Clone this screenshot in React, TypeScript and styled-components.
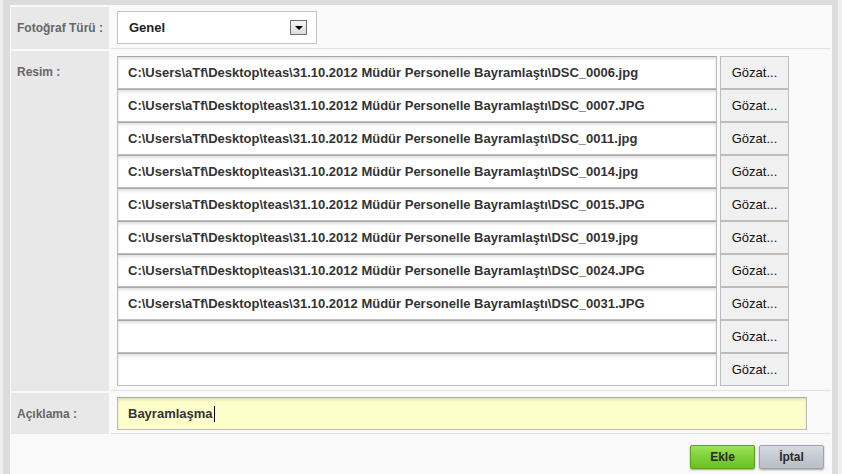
import React from "react";
import styled, { createGlobalStyle } from "styled-components";

const Global = createGlobalStyle`
  html, body { margin: 0; padding: 0; }
  body { background: #dcdcdc; font-family: "Liberation Sans", Arial, sans-serif; }
`;

const Page = styled.div`
  width: 842px;
  height: 474px;
  box-sizing: border-box;
  background: #dcdcdc;
  border-left: 3px solid #efefef;
  border-right: 4px solid #efefef;
  padding: 5px 6px 0 7px;
  overflow: hidden;
`;

const Form = styled.div`
  background: #f9f9f9;
  height: 100%;
  box-sizing: border-box;
  padding: 2px 1px 0 1px;
  display: flex;
  flex-direction: column;
  gap: 2px;
`;

const Row = styled.div`
  display: grid;
  grid-template-columns: 98px 1fr;
  gap: 2px;
`;

const Label = styled.div<{ $top?: boolean }>`
  background: #e8e8e8;
  color: #666;
  font-weight: bold;
  font-size: 12px;
  padding: 0 6px;
  display: flex;
  align-items: ${(p) => (p.$top ? "flex-start" : "center")};
  padding-top: ${(p) => (p.$top ? "14px" : "0")};
`;

const Cell = styled.div<{ $pt: number; $pb: number }>`
  background: #fafafa;
  border-bottom: 1px solid #e2e2e2;
  padding: ${(p) => p.$pt}px 0 ${(p) => p.$pb}px 6px;
`;

const Select = styled.div`
  width: 200px;
  height: 33px;
  box-sizing: border-box;
  border: 1px solid #c4c4c4;
  background: #fff;
  display: flex;
  align-items: center;
  justify-content: space-between;
  padding: 0 9px 0 11px;
  font-size: 13px;
  font-weight: bold;
  color: #222;
`;

const Arrow = styled.div`
  width: 17px;
  height: 15px;
  box-sizing: border-box;
  border: 1px solid #6f6f6f;
  background: linear-gradient(#f4f4f4, #dedede);
  display: flex;
  align-items: center;
  justify-content: center;
  &::after {
    content: "";
    border-left: 4px solid transparent;
    border-right: 4px solid transparent;
    border-top: 4px solid #000;
  }
`;

const FileList = styled.div`
  display: flex;
  flex-direction: column;
`;

const FileRow = styled.div`
  display: flex;
  gap: 3px;
  height: 33px;
`;

const TextBox = styled.div<{ $w: number; $yellow?: boolean }>`
  width: ${(p) => p.$w}px;
  height: 33px;
  box-sizing: border-box;
  border: 1px solid #bdbdbd;
  border-top-color: #a8a8a8;
  background: ${(p) => (p.$yellow ? "#fefecb" : "#fff")};
  box-shadow: inset 0 2px 3px rgba(0, 0, 0, 0.12);
  display: flex;
  align-items: center;
  padding-left: 10px;
  font-size: 13px;
  font-weight: bold;
  color: #333;
  white-space: nowrap;
  overflow: hidden;
`;

const Caret = styled.span`
  display: inline-block;
  width: 1px;
  height: 16px;
  background: #000;
  margin-left: 1px;
`;

const Browse = styled.div`
  width: 69px;
  height: 33px;
  box-sizing: border-box;
  border: 1px solid #bdbdbd;
  background: #f0f0f0;
  display: flex;
  align-items: center;
  justify-content: center;
  font-size: 13px;
  color: #111;
`;

const Footer = styled.div`
  flex: 1;
  display: flex;
  justify-content: flex-end;
  align-items: flex-start;
  gap: 4px;
  padding: 9px 7px 0 0;
`;

const Btn = styled.div<{ $green?: boolean }>`
  width: 65px;
  height: 24px;
  box-sizing: border-box;
  border-radius: 2px;
  border: 1px solid ${(p) => (p.$green ? "#5aa21c" : "#9ea3ab")};
  background: ${(p) =>
    p.$green
      ? "linear-gradient(#9ee25a, #7fd03a 50%, #6cc020)"
      : "linear-gradient(#d6d9df, #c6cad2 50%, #b9bec7)"};
  box-shadow: 0 1px 2px rgba(0, 0, 0, 0.35);
  display: flex;
  align-items: center;
  justify-content: center;
  font-size: 12px;
  font-weight: bold;
  color: #2a2a2a;
`;

const files = [
  "C:\\Users\\aTf\\Desktop\\teas\\31.10.2012 Müdür Personelle Bayramlaştı\\DSC_0006.jpg",
  "C:\\Users\\aTf\\Desktop\\teas\\31.10.2012 Müdür Personelle Bayramlaştı\\DSC_0007.JPG",
  "C:\\Users\\aTf\\Desktop\\teas\\31.10.2012 Müdür Personelle Bayramlaştı\\DSC_0011.jpg",
  "C:\\Users\\aTf\\Desktop\\teas\\31.10.2012 Müdür Personelle Bayramlaştı\\DSC_0014.jpg",
  "C:\\Users\\aTf\\Desktop\\teas\\31.10.2012 Müdür Personelle Bayramlaştı\\DSC_0015.JPG",
  "C:\\Users\\aTf\\Desktop\\teas\\31.10.2012 Müdür Personelle Bayramlaştı\\DSC_0019.jpg",
  "C:\\Users\\aTf\\Desktop\\teas\\31.10.2012 Müdür Personelle Bayramlaştı\\DSC_0024.JPG",
  "C:\\Users\\aTf\\Desktop\\teas\\31.10.2012 Müdür Personelle Bayramlaştı\\DSC_0031.JPG",
  "",
  "",
];

export default function App() {
  return (
    <>
      <Global />
      <Page>
        <Form>
          <Row>
            <Label>Fotoğraf Türü :</Label>
            <Cell $pt={4} $pb={4}>
              <Select>
                Genel
                <Arrow />
              </Select>
            </Cell>
          </Row>
          <Row>
            <Label $top>Resim :</Label>
            <Cell $pt={5} $pb={4}>
              <FileList>
                {files.map((f, i) => (
                  <FileRow key={i}>
                    <TextBox $w={600}>{f}</TextBox>
                    <Browse>Gözat...</Browse>
                  </FileRow>
                ))}
              </FileList>
            </Cell>
          </Row>
          <Row>
            <Label>Açıklama :</Label>
            <Cell $pt={4} $pb={3}>
              <TextBox $w={690} $yellow>
                Bayramlaşma
                <Caret />
              </TextBox>
            </Cell>
          </Row>
          <Footer>
            <Btn $green>Ekle</Btn>
            <Btn>İptal</Btn>
          </Footer>
        </Form>
      </Page>
    </>
  );
}
